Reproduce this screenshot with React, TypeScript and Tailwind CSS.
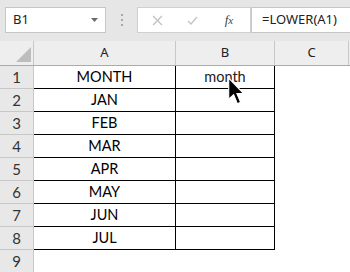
import React from 'react';

const months = ['MONTH', 'JAN', 'FEB', 'MAR', 'APR', 'MAY', 'JUN', 'JUL'];

const uiFont = { fontFamily: '"Noto Sans", "Open Sans", sans-serif' };
const cellFont = { fontFamily: 'Lato, "Open Sans", sans-serif' };

function Toolbar() {
  return (
    <div className="h-[41px] bg-[#e6e6e6] flex items-start pt-[7px] pl-[5px]" style={uiFont}>
      {/* name box */}
      <div className="w-[101px] h-[26px] bg-white border border-[#c6c6c6] flex items-center justify-between pl-[7px] pr-[7px]">
        <span className="text-[13px] text-[#222]">B1</span>
        <svg width="7" height="4" viewBox="0 0 7 4">
          <path d="M0 0 L7 0 L3.5 4 Z" fill="#6b6b6b" />
        </svg>
      </div>
      {/* grip dots */}
      <div className="w-[31px] h-[26px] flex flex-col items-center justify-center gap-[3px]">
        <span className="w-[2px] h-[2px] bg-[#a8a8a8]" />
        <span className="w-[2px] h-[2px] bg-[#a8a8a8]" />
        <span className="w-[2px] h-[2px] bg-[#a8a8a8]" />
      </div>
      {/* cancel / enter / fx */}
      <div className="w-[114px] h-[26px] bg-white border border-[#d0d0d0] flex items-center">
        <div className="w-[38px] flex justify-center">
          <svg width="11" height="11" viewBox="0 0 10 10">
            <path d="M1 1 L9 9 M9 1 L1 9" stroke="#c4c4c4" strokeWidth="1.3" />
          </svg>
        </div>
        <div className="w-[32px] flex justify-center">
          <svg width="11" height="9" viewBox="0 0 11 9">
            <path d="M1 5 L4 8 L10 1" stroke="#c4c4c4" strokeWidth="1.3" fill="none" />
          </svg>
        </div>
        <div className="flex-1 flex justify-center">
          <span className="text-[13px] italic text-[#444]" style={{ fontFamily: '"Liberation Serif", serif' }}>
            f<span className="text-[11px]">x</span>
          </span>
        </div>
      </div>
      {/* formula text */}
      <div className="flex-1 h-[26px] bg-white border border-r-0 border-[#c6c6c6] flex items-center pl-[10px]">
        <span className="text-[13px] text-[#222]">=LOWER(A1)</span>
      </div>
    </div>
  );
}

function HeaderRow() {
  return (
    <div className="h-[25px] flex bg-[#eeeeee] border-b border-[#ababab]" style={uiFont}>
      <div className="w-[34px] border-r border-[#c8c8c8] relative">
        <svg className="absolute left-[16px] top-[6px]" width="15" height="15" viewBox="0 0 15 15">
          <path d="M15 0 L15 15 L0 15 Z" fill="#bdbdbd" />
        </svg>
      </div>
      <div className="w-[142px] border-r border-[#c8c8c8] flex items-center justify-center text-[13px] text-[#222]">A</div>
      <div className="w-[99px] border-r border-[#c8c8c8] flex items-center justify-center text-[13px] text-[#222]">B</div>
      <div className="w-[74px] border-r border-[#c8c8c8] flex items-center justify-center text-[13px] text-[#222]">C</div>
      <div className="flex-1" />
    </div>
  );
}

function Row({ n, a, b }: { n: number; a?: string; b?: string }) {
  const bordered = a !== undefined;
  return (
    <div className="h-[23px] flex">
      <div
        className="w-[34px] bg-[#e8e8e8] border-r border-b border-[#c8c8c8] flex items-center justify-center text-[15px] text-[#333]"
        style={cellFont}
      >
        {n}
      </div>
      <div
        className={`w-[142px] flex items-center justify-center text-[14.5px] text-black ${bordered ? 'border-r border-b border-black' : ''}`}
        style={cellFont}
      >
        {a}
      </div>
      <div
        className={`w-[99px] flex items-center justify-center text-[14.5px] text-[#222] ${bordered ? 'border-r border-b border-black' : ''}`}
        style={cellFont}
      >
        {b}
      </div>
      <div className="flex-1" />
    </div>
  );
}

export default function App() {
  return (
    <div className="w-[350px] h-[272px] overflow-hidden bg-white relative">
      <Toolbar />
      <HeaderRow />
      {months.map((m, i) => (
        <Row key={m} n={i + 1} a={m} b={i === 0 ? 'month' : ''} />
      ))}
      <Row n={9} />

      {/* mouse pointer */}
      <svg className="absolute left-[228px] top-[77px]" width="17" height="29" viewBox="0 0 12 20">
        <path
          d="M0.5 0.5 L0.5 15.5 L4 12.3 L6.6 18.6 L8.9 17.6 L6.3 11.4 L11 11.4 Z"
          fill="#000"
          stroke="#fff"
          strokeWidth="0.8"
        />
      </svg>
    </div>
  );
}
